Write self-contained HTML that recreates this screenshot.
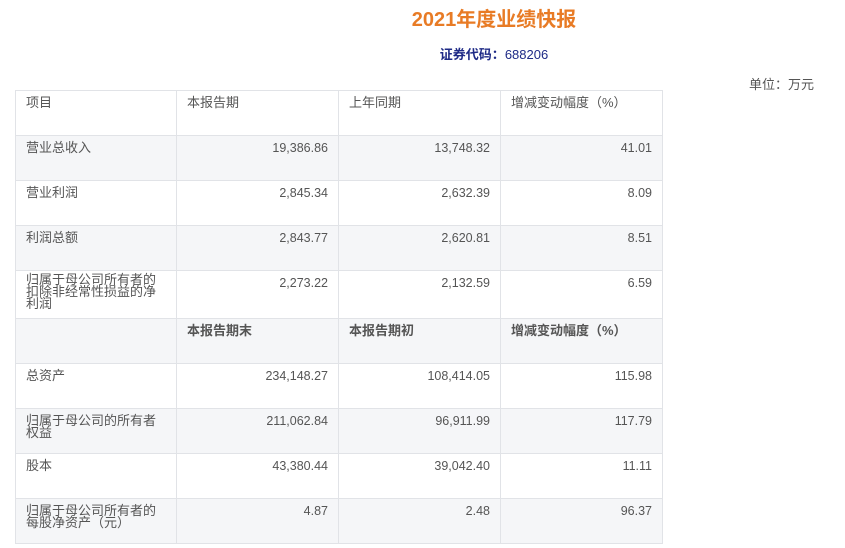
<!DOCTYPE html>
<html><head><meta charset="utf-8"><style>
body{margin:0;width:845px;height:548px;background:#fff;font-family:"Liberation Sans","Noto Sans CJK SC",sans-serif;position:relative;overflow:hidden}
.t{position:absolute;left:0;top:3px;width:988px;text-align:center;color:#e87b25;font-weight:bold;font-size:20px}
.c{position:absolute;left:0;top:44px;width:988px;text-align:center;color:#1e2a86;font-size:13px;font-weight:bold}
.c span{font-weight:normal}
.u{position:absolute;left:749px;top:74px;font-size:13px;color:#555}
table{position:absolute;left:15px;top:90px;border-collapse:collapse;font-size:13px;color:#555}
td{border:1px solid #e1e3e7;vertical-align:top;padding:6px 10px 0 10px;width:141px;line-height:12px;box-sizing:border-box}
td.n{text-align:right;font-size:12.5px}
tr.g td{background:#f5f6f8}
.h2 td{font-weight:bold}
</style></head><body>
<div class="t">2021年度业绩快报</div>
<div class="c">证券代码：<span>688206</span></div>
<div class="u">单位：万元</div>
<table>
<tr style="height:45px"><td style="width:161px">项目</td><td style="width:162px">本报告期</td><td style="width:162px">上年同期</td><td style="width:162px">增减变动幅度（%）</td></tr>
<tr class="g" style="height:45px"><td>营业总收入</td><td class="n">19,386.86</td><td class="n">13,748.32</td><td class="n">41.01</td></tr>
<tr style="height:45px"><td>营业利润</td><td class="n">2,845.34</td><td class="n">2,632.39</td><td class="n">8.09</td></tr>
<tr class="g" style="height:45px"><td>利润总额</td><td class="n">2,843.77</td><td class="n">2,620.81</td><td class="n">8.51</td></tr>
<tr style="height:48px"><td style="padding-top:3px">归属于母公司所有者的<br>扣除非经常性损益的净<br>利润</td><td class="n">2,273.22</td><td class="n">2,132.59</td><td class="n">6.59</td></tr>
<tr class="g h2" style="height:45px"><td></td><td>本报告期末</td><td>本报告期初</td><td>增减变动幅度（%）</td></tr>
<tr style="height:45px"><td>总资产</td><td class="n">234,148.27</td><td class="n">108,414.05</td><td class="n">115.98</td></tr>
<tr class="g" style="height:45px"><td>归属于母公司的所有者<br>权益</td><td class="n">211,062.84</td><td class="n">96,911.99</td><td class="n">117.79</td></tr>
<tr style="height:45px"><td>股本</td><td class="n">43,380.44</td><td class="n">39,042.40</td><td class="n">11.11</td></tr>
<tr class="g" style="height:45px"><td>归属于母公司所有者的<br>每股净资产（元）</td><td class="n">4.87</td><td class="n">2.48</td><td class="n">96.37</td></tr>
</table>
</body></html>
